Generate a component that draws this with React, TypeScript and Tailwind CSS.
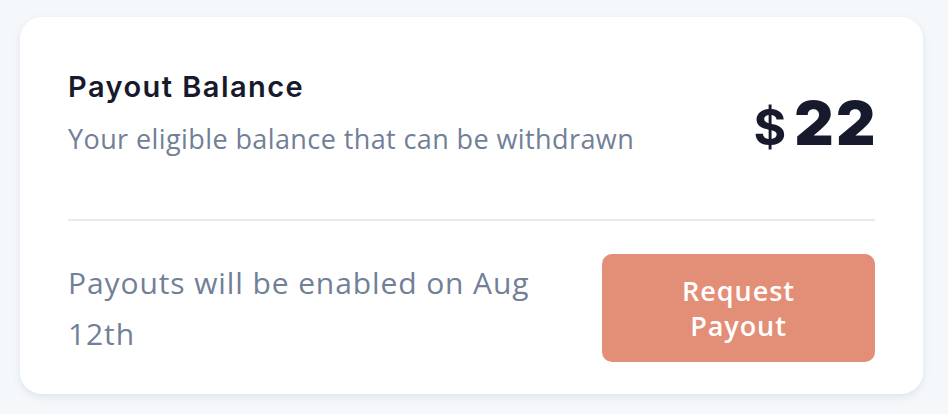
export default function App() {
  return (
    <div className="min-h-screen bg-[#f5f8fb] pl-[20px] pr-[25px] pt-[17px] pb-[20px] font-['Open_Sans',sans-serif]">
      <div className="rounded-[22px] bg-white px-[48px] pt-[48px] pb-[32px] shadow-[0_3px_8px_rgba(30,41,80,0.10)]">
        {/* Balance */}
        <div className="flex items-start justify-between">
          <div>
            <h2 className="mt-[2px] font-['Inter',sans-serif] text-[29px] font-semibold leading-[40px] tracking-[0.05em] text-[#171a2c]">
              Payout Balance
            </h2>
            <p className="mt-[14px] text-[27px] leading-[36px] tracking-[0.015em] text-[#718096]">
              Your eligible balance that can be withdrawn
            </p>
          </div>
          <div className="-mr-[3px] mt-[28px] flex items-baseline gap-[8px] font-['Inter',sans-serif] leading-[60px] text-[#171a2c]">
            <span className="text-[50px] font-bold">$</span>
            <span className="text-[61px] font-black tracking-[0.04em]">22</span>
          </div>
        </div>

        <div className="mt-[62px] h-[2px] bg-[#e9eaf0]" />

        {/* Payout request */}
        <div className="mt-[33px] flex items-center justify-between gap-[40px]">
          <p className="max-w-[490px] text-[30px] leading-[51px] tracking-[0.03em] text-[#718096]">
            Payouts will be enabled on Aug 12th
          </p>
          <button className="h-[108px] w-[273px] shrink-0 rounded-[10px] bg-[#e38e77] text-[27px] font-semibold leading-[35px] tracking-[0.035em] text-white">
            Request
            <br />
            Payout
          </button>
        </div>
      </div>
    </div>
  )
}
